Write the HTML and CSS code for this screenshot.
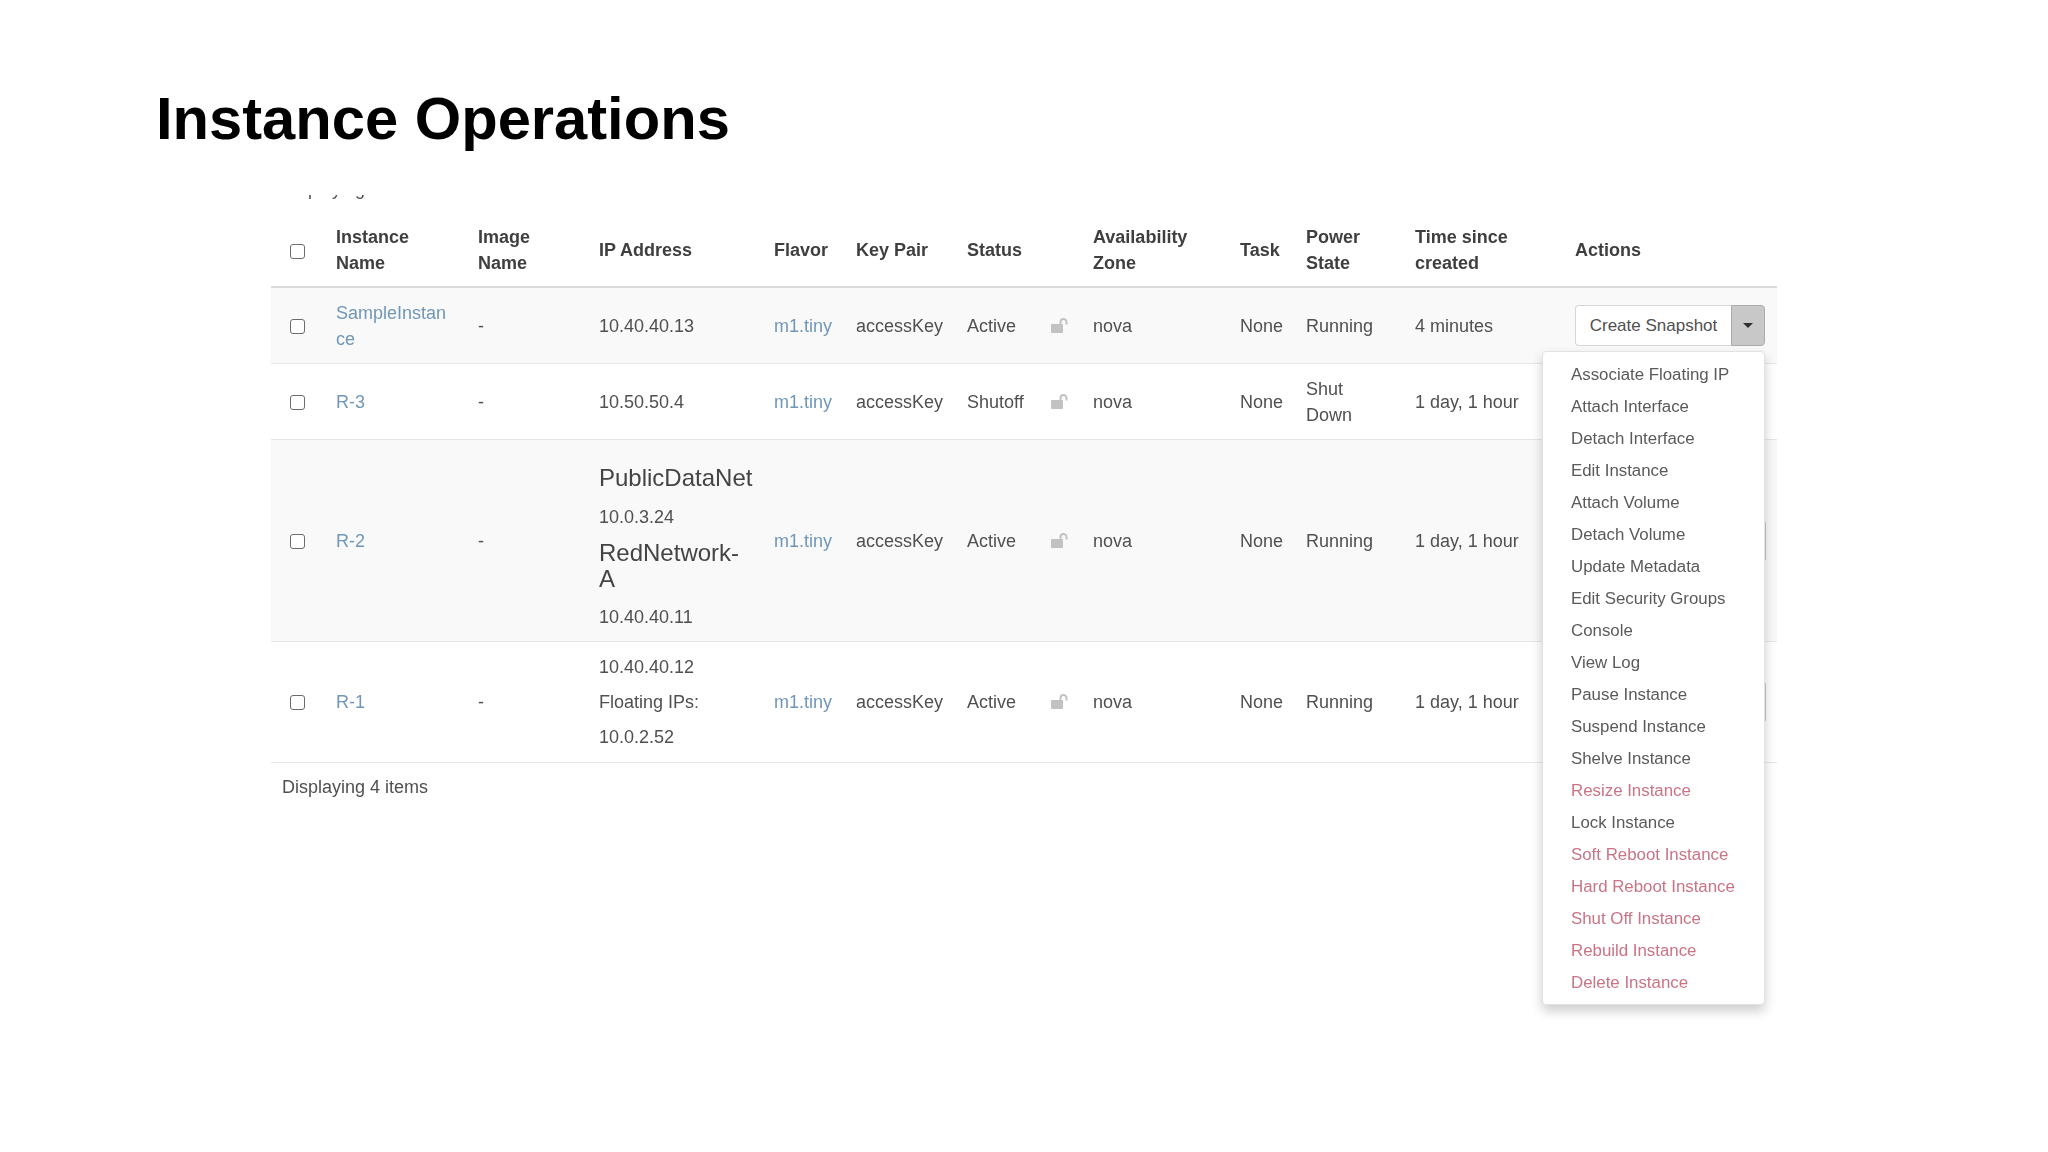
FILE: index.html
```html
<!DOCTYPE html>
<html lang="en">
<head>
<meta charset="utf-8">
<title>Instance Operations</title>
<link rel="stylesheet" href="styles.css">
</head>
<body>
<main class="slide">
  <h1 class="title">Instance Operations</h1>
  <section class="panel">
    <div class="clip"><p class="clip-text">Displaying 4 items</p></div>
    <table class="grid">
      <colgroup>
        <col class="c-check"><col class="c-name"><col class="c-image"><col class="c-ip"><col class="c-flavor"><col class="c-key"><col class="c-status"><col class="c-lock"><col class="c-zone"><col class="c-task"><col class="c-power"><col class="c-time"><col class="c-actions">
      </colgroup>
      <thead>
        <tr>
          <th class="cell-check"><input type="checkbox" class="check"></th>
          <th>Instance Name</th><th>Image Name</th><th>IP Address</th><th>Flavor</th><th>Key Pair</th>
          <th colspan="2">Status</th><th>Availability Zone</th><th>Task</th><th>Power State</th><th>Time since created</th><th>Actions</th>
        </tr>
      </thead>
      <tbody>
        <tr class="striped">
          <td class="cell-check"><input type="checkbox" class="check"></td>
          <td class="name"><a href="#">SampleInstance</a></td><td>-</td><td>10.40.40.13</td>
          <td><a href="#">m1.tiny</a></td><td>accessKey</td><td>Active</td>
          <td><svg class="lock" viewBox="0 0 17 15"><rect x="0" y="6" width="12" height="9" rx="1"/><path d="M9.5 6V4a3 3 0 0 1 6 0v2.5"/></svg></td>
          <td>nova</td><td>None</td><td>Running</td><td>4 minutes</td>
          <td>
            <div class="btn-group">
              <button class="btn-main" type="button">Create Snapshot</button>
              <button class="btn-toggle" type="button" aria-label="More actions"><span class="caret"></span></button>
              <ul class="menu">
                <li>Associate Floating IP</li>
                <li>Attach Interface</li>
                <li>Detach Interface</li>
                <li>Edit Instance</li>
                <li>Attach Volume</li>
                <li>Detach Volume</li>
                <li>Update Metadata</li>
                <li>Edit Security Groups</li>
                <li>Console</li>
                <li>View Log</li>
                <li>Pause Instance</li>
                <li>Suspend Instance</li>
                <li>Shelve Instance</li>
                <li class="danger">Resize Instance</li>
                <li>Lock Instance</li>
                <li class="danger">Soft Reboot Instance</li>
                <li class="danger">Hard Reboot Instance</li>
                <li class="danger">Shut Off Instance</li>
                <li class="danger">Rebuild Instance</li>
                <li class="danger">Delete Instance</li>
              </ul>
            </div>
          </td>
        </tr>
        <tr>
          <td class="cell-check"><input type="checkbox" class="check"></td>
          <td class="name"><a href="#">R-3</a></td><td>-</td><td>10.50.50.4</td>
          <td><a href="#">m1.tiny</a></td><td>accessKey</td><td>Shutoff</td>
          <td><svg class="lock" viewBox="0 0 17 15"><rect x="0" y="6" width="12" height="9" rx="1"/><path d="M9.5 6V4a3 3 0 0 1 6 0v2.5"/></svg></td>
          <td>nova</td><td>None</td><td>Shut<br>Down</td><td>1 day, 1 hour</td><td></td>
        </tr>
        <tr class="striped">
          <td class="cell-check"><input type="checkbox" class="check"></td>
          <td class="name"><a href="#">R-2</a></td><td>-</td>
          <td>
            <h4 class="net net-first">PublicDataNet</h4>
            <div>10.0.3.24</div>
            <h4 class="net net-second">RedNetwork-A</h4>
            <div>10.40.40.11</div>
          </td>
          <td><a href="#">m1.tiny</a></td><td>accessKey</td><td>Active</td>
          <td><svg class="lock" viewBox="0 0 17 15"><rect x="0" y="6" width="12" height="9" rx="1"/><path d="M9.5 6V4a3 3 0 0 1 6 0v2.5"/></svg></td>
          <td>nova</td><td>None</td><td>Running</td><td>1 day, 1 hour</td>
          <td><div class="peek"></div></td>
        </tr>
        <tr>
          <td class="cell-check"><input type="checkbox" class="check"></td>
          <td class="name"><a href="#">R-1</a></td><td>-</td>
          <td class="ip-stack">
            <div>10.40.40.12</div>
            <div>Floating IPs:</div>
            <div>10.0.2.52</div>
          </td>
          <td><a href="#">m1.tiny</a></td><td>accessKey</td><td>Active</td>
          <td><svg class="lock" viewBox="0 0 17 15"><rect x="0" y="6" width="12" height="9" rx="1"/><path d="M9.5 6V4a3 3 0 0 1 6 0v2.5"/></svg></td>
          <td>nova</td><td>None</td><td>Running</td><td>1 day, 1 hour</td>
          <td><div class="peek"></div></td>
        </tr>
      </tbody>
    </table>
    <p class="count">Displaying 4 items</p>
  </section>
</main>
</body>
</html>
```
FILE: styles.css
```css
* { box-sizing: border-box; }
html, body { margin: 0; padding: 0; background: #fff; }
body { font-family: "Liberation Sans", Arial, sans-serif; color: #505050; }
.slide { width: 2048px; height: 1152px; overflow: hidden; }
.title {
  margin: 0;
  padding: 83px 0 0 156px;
  font-size: 59.7px;
  line-height: 72px;
  font-weight: 700;
  color: #000;
  filter: blur(0.4px);
}
.panel {
  margin: 40px 0 0 271px;
  width: 1506px;
  font-size: 18px;
  line-height: 26px;
  filter: blur(0.55px);
}
.clip { height: 17px; overflow: hidden; }
.clip-text { margin: -19px 0 0 11px; }
.grid { width: 1506px; table-layout: fixed; border-collapse: separate; border-spacing: 0; }
.c-check { width: 55px; }
.c-name { width: 142px; }
.c-image { width: 121px; }
.c-ip { width: 175px; }
.c-flavor { width: 82px; }
.c-key { width: 111px; }
.c-status { width: 84px; }
.c-lock { width: 42px; }
.c-zone { width: 147px; }
.c-task { width: 66px; }
.c-power { width: 109px; }
.c-time { width: 160px; }
.c-actions { width: 212px; }
th {
  padding: 12px 10px 10px;
  text-align: left;
  font-weight: 700;
  color: #3f3f3f;
  vertical-align: middle;
  border-bottom: 2px solid #d9d9d9;
}
td {
  padding: 11.5px 10px;
  vertical-align: middle;
  border-bottom: 1px solid #e6e6e6;
}
.striped td { background: #f9f9f9; }
.cell-check { padding-left: 19px; padding-right: 0; }
.check {
  appearance: none;
  display: block;
  margin: 2px 0 0;
  width: 15px;
  height: 15px;
  border: 1.5px solid #6c6c6c;
  border-radius: 3px;
  background: #fff;
}
a { color: #7097b8; text-decoration: none; }
.name { padding-right: 14px; word-break: break-all; }
.lock { display: block; width: 17px; height: 15px; margin-top: -1px; }
.lock rect { fill: #c2c2c2; }
.lock path { fill: none; stroke: #c2c2c2; stroke-width: 2; }
.net { margin: 0; font-size: 24px; line-height: 26px; font-weight: 400; color: #444; }
.net-first { margin: 13px 0; }
.net-second { margin: 10px 0 12px; }
.ip-stack div + div { margin-top: 9.4px; }
.btn-group { position: relative; display: flex; width: 190px; height: 41px; }
.btn-main {
  flex: 1;
  padding: 0;
  font: inherit;
  font-size: 17px;
  color: #505050;
  background: #fff;
  border: 1px solid #d6d6d6;
  border-right: 0;
  border-radius: 4px 0 0 4px;
}
.btn-toggle {
  display: flex;
  align-items: center;
  justify-content: center;
  width: 34px;
  padding: 0;
  background: #c8c8c8;
  border: 1px solid #ababab;
  border-radius: 0 4px 4px 0;
}
.caret { width: 0; height: 0; border-style: solid; border-width: 5px 5px 0; border-color: #2f2f2f transparent transparent; }
.peek {
  width: 34px;
  height: 38px;
  margin-left: 157px;
  background: #fff;
  border-right: 1px solid #c8c8c8;
}
.menu {
  position: absolute;
  z-index: 2;
  top: 46px;
  right: 0;
  width: 223px;
  margin: 0;
  padding: 7px 0 5px;
  list-style: none;
  background: #fff;
  border: 1px solid #e2e2e2;
  border-radius: 4px;
  box-shadow: 0 6px 12px rgba(0, 0, 0, 0.2);
  font-size: 16.85px;
  line-height: 32px;
  color: #5a5a5a;
}
.menu li { padding-left: 28px; white-space: nowrap; }
.menu .danger { color: #cb7385; }
.count { margin: 11px 0 0 11px; }
```
